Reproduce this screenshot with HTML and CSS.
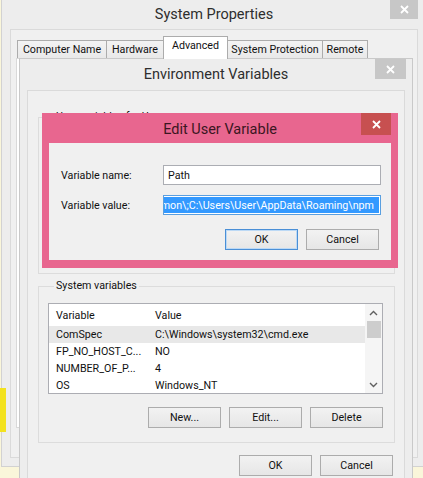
FILE: index.html
```html
<!DOCTYPE html>
<html>
<head>
<meta charset="utf-8">
<link rel="stylesheet" href="styles.css">
</head>
<body>
<div class="window sysprops">
  <div class="titlebar">
    <span class="title">System Properties</span>
    <span class="close inactive"><svg width="9" height="9" viewBox="0 0 9 9"><path d="M1 1L8 8M8 1L1 8" stroke="#fff" stroke-width="1.8"/></svg></span>
  </div>
  <div class="client">
    <div class="tabs">
      <div class="tab t1">Computer Name</div>
      <div class="tab t2">Hardware</div>
      <div class="tab t3 selected">Advanced</div>
      <div class="tab t4">System Protection</div>
      <div class="tab t5">Remote</div>
    </div>
    <div class="tabpanel"></div>
  </div>
</div>

<div class="marker"></div>

<div class="window envvars">
  <div class="titlebar">
    <span class="title">Environment Variables</span>
    <span class="close inactive"><svg width="9" height="9" viewBox="0 0 9 9"><path d="M1 1L8 8M8 1L1 8" stroke="#fff" stroke-width="1.8"/></svg></span>
  </div>
  <div class="client">
    <fieldset class="group usergroup">
      <legend>User variables for User</legend>
    </fieldset>
    <fieldset class="group sysgroup">
      <legend>System variables</legend>
      <div class="list">
        <div class="listbody">
          <div class="row head"><span class="c1">Variable</span><span class="c2">Value</span></div>
          <div class="row sel"><span class="c1">ComSpec</span><span class="c2">C:\Windows\system32\cmd.exe</span></div>
          <div class="row"><span class="c1">FP_NO_HOST_C...</span><span class="c2">NO</span></div>
          <div class="row"><span class="c1">NUMBER_OF_P...</span><span class="c2">4</span></div>
          <div class="row"><span class="c1">OS</span><span class="c2">Windows_NT</span></div>
        </div>
        <div class="scrollbar">
          <div class="arrow"><svg width="9" height="6" viewBox="0 0 9 6"><path d="M1 5L4.5 1.5L8 5" fill="none" stroke="#606060" stroke-width="1.4"/></svg></div>
          <div class="thumb"></div>
          <div class="track"></div>
          <div class="arrow"><svg width="9" height="6" viewBox="0 0 9 6"><path d="M1 1L4.5 4.5L8 1" fill="none" stroke="#606060" stroke-width="1.4"/></svg></div>
        </div>
      </div>
      <div class="btnrow">
        <button class="btn">New...</button>
        <button class="btn">Edit...</button>
        <button class="btn">Delete</button>
      </div>
    </fieldset>
    <div class="btnrow footer">
      <button class="btn">OK</button>
      <button class="btn">Cancel</button>
    </div>
  </div>
</div>

<div class="window editvar">
  <div class="titlebar">
    <span class="title">Edit User Variable</span>
    <span class="close active"><svg width="9" height="9" viewBox="0 0 9 9"><path d="M1 1L8 8M8 1L1 8" stroke="#fff" stroke-width="1.8"/></svg></span>
  </div>
  <div class="client">
    <div class="frow">
      <span class="flabel">Variable name:</span>
      <div class="field">Path</div>
    </div>
    <div class="frow">
      <span class="flabel">Variable value:</span>
      <div class="field focus"><span class="selection">Common\;C:\Users\User\AppData\Roaming\npm</span></div>
    </div>
    <div class="btnrow dlgbtns">
      <button class="btn default">OK</button>
      <button class="btn">Cancel</button>
    </div>
  </div>
</div>
</body>
</html>
```

FILE: styles.css
```css
* { box-sizing: border-box; }

body {
  margin: 0;
  width: 423px;
  height: 478px;
  overflow: hidden;
  position: relative;
  background: #faf6da;
  font-family: Roboto, "Noto Sans", sans-serif;
  font-size: 10.7px;
  color: #000;
}

.window {
  position: absolute;
  display: flex;
  flex-direction: column;
}

.titlebar {
  position: relative;
  display: flex;
  align-items: center;
  justify-content: center;
  flex: none;
}

.title {
  font-size: 14.5px;
  color: #2e2e2e;
}

.close {
  position: absolute;
  top: 0;
  right: 0;
  display: flex;
  align-items: center;
  justify-content: center;
}
.close.inactive { background: #c7c7c7; }
.close.active { background: #c75050; }

/* System Properties */
.sysprops {
  left: 1px;
  top: -1px;
  width: 426px;
  height: 468px;
  background: #ededed;
  border: 1px solid #d2d2d2;
  padding: 0 8px 8px;
}
.sysprops .titlebar { height: 29px; }
.sysprops .close { width: 28px; height: 19px; }
.sysprops .client {
  flex: 1;
  background: #f0f0f0;
  border: 1px solid #dadada;
  padding: 7px 6px 29px 5px;
  display: flex;
  flex-direction: column;
}
.tabs {
  display: flex;
  align-items: flex-end;
  height: 21px;
  padding-left: 1px;
  position: relative;
  z-index: 1;
}
.tab {
  height: 18px;
  border: 1px solid #acacac;
  border-bottom: none;
  background: linear-gradient(#f3f3f3, #e9e9e9);
  margin-left: -1px;
  display: flex;
  align-items: center;
  justify-content: center;
  color: #111;
}
.tab.t1 { margin-left: 0; width: 90px; }
.tab.t2 { width: 58px; }
.tab.t3 { width: 65px; }
.tab.t4 { width: 96px; }
.tab.t5 { width: 46px; }
.tab.selected {
  height: 23px;
  margin-bottom: -1px;
  background: #fff;
  align-items: flex-start;
  padding-top: 2px;
  position: relative;
  z-index: 2;
}
.tabpanel {
  flex: 1;
  background: #fff;
  border: 1px solid #d9d9d9;
}

.marker {
  position: absolute;
  left: 0;
  top: 388px;
  width: 6px;
  height: 44px;
  background: #f3e21d;
}

/* Environment Variables */
.envvars {
  left: 19px;
  top: 58px;
  width: 394px;
  height: 440px;
  background: #ededed;
  border: 1px solid #c9c9c9;
  padding: 0 7px;
}
.envvars .titlebar { height: 31px; }
.envvars .close { width: 31px; height: 20px; right: -1px; }
.envvars .client {
  flex: 1;
  background: #f0f0f0;
  border: 1px solid #dadada;
  padding: 0 9px 0 10px;
  display: flex;
  flex-direction: column;
}

.group {
  margin: 0;
  border: 1px solid #dcdcdc;
  padding: 0 11px 14px 9px;
  min-width: 0;
}
.group legend {
  padding: 0 2px;
  margin-left: 6px;
  line-height: 16px;
  color: #111;
}
.usergroup {
  margin-top: 18px;
  height: 165px;
}
.sysgroup {
  margin-top: 4px;
}

.list {
  margin-top: 9px;
  height: 91px;
  border: 1px solid #acadb3;
  background: #fff;
  display: flex;
  overflow: hidden;
}
.listbody {
  flex: 1;
  display: flex;
  flex-direction: column;
}
.row {
  display: flex;
  height: 17px;
  align-items: center;
  flex: none;
  color: #111;
}
.row.head { height: 22px; }
.row.sel { background: #e8e8e8; }
.c1 { width: 99px; padding-left: 7px; white-space: nowrap; }
.c2 { padding-left: 7px; white-space: nowrap; }

.scrollbar {
  width: 17px;
  background: #f5f5f5;
  display: flex;
  flex-direction: column;
  align-items: center;
}
.scrollbar .arrow {
  height: 17px;
  width: 17px;
  display: flex;
  align-items: center;
  justify-content: center;
  flex: none;
}
.scrollbar .thumb {
  width: 14px;
  height: 17px;
  background: #cdcdcd;
  flex: none;
}
.scrollbar .track { flex: 1; }

.btnrow {
  display: flex;
  justify-content: flex-end;
  gap: 8px;
  margin-top: 13px;
}
.btn {
  width: 73px;
  height: 21px;
  margin: 0;
  padding: 0;
  border: 1px solid #acacac;
  background: linear-gradient(#f2f2f2, #e6e6e6);
  font: inherit;
  color: #111;
  display: flex;
  align-items: center;
  justify-content: center;
}
.btn.default { border-color: #4a8fd6; box-shadow: inset 0 0 0 1px #bcd9f5; }
.footer {
  margin-top: 12px;
  padding-right: 2px;
}

/* Edit User Variable */
.editvar {
  left: 42px;
  top: 113px;
  width: 356px;
  height: 155px;
  background: #e8668f;
  padding: 0 7px 8px;
}
.editvar .titlebar { height: 30px; }
.editvar .title { color: #3b1622; padding-top: 2px; }
.editvar .close { width: 30px; height: 22px; right: 0; }
.editvar .client {
  flex: 1;
  background: #f0f0f0;
  padding: 22px 10px 0 12px;
  display: flex;
  flex-direction: column;
  gap: 10px;
}
.frow {
  display: flex;
  align-items: center;
}
.flabel {
  width: 102px;
  flex: none;
  color: #111;
}
.field {
  flex: 1;
  height: 20px;
  border: 1px solid #abadb3;
  background: #fff;
  padding-left: 4px;
  display: flex;
  align-items: center;
  color: #111;
  overflow: hidden;
  white-space: nowrap;
}
.field.focus {
  border-color: #5a9fe0;
  padding: 1px;
  justify-content: flex-end;
}
.selection {
  background: #3399ff;
  color: #fff;
  height: 100%;
  display: flex;
  align-items: center;
  padding-right: 5px;
}
.dlgbtns {
  margin-top: 4px;
  padding-right: 2px;
}
```
